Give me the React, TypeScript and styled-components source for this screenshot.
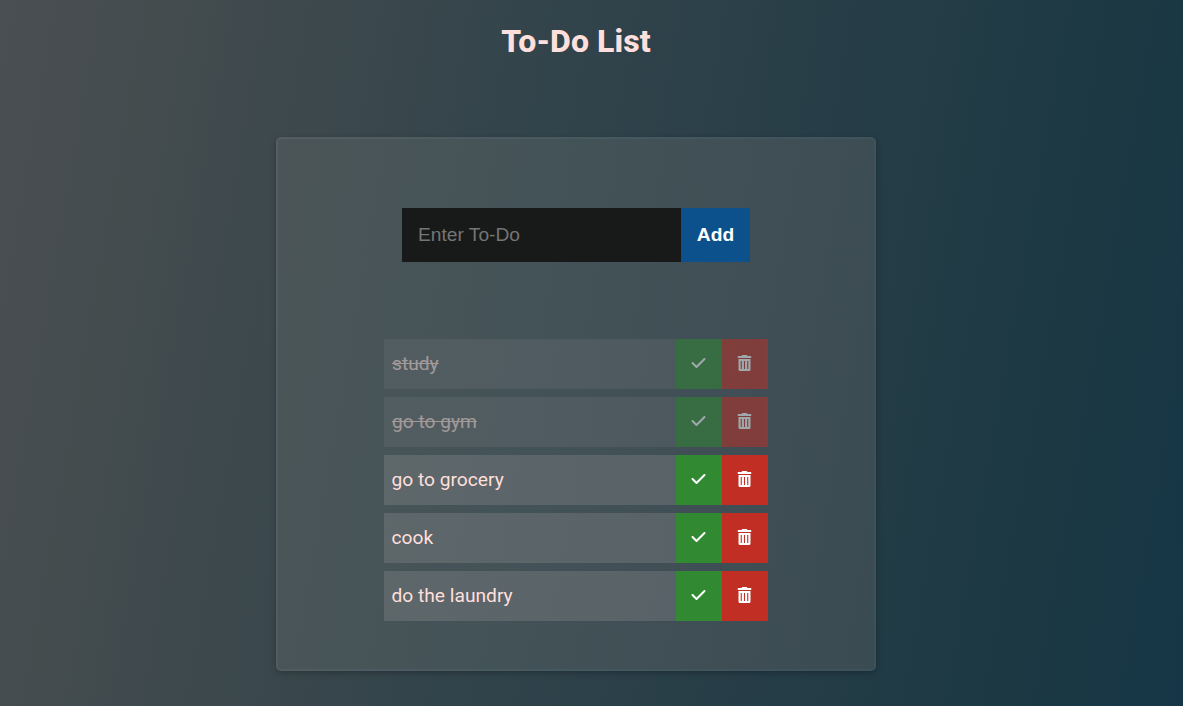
import React from "react";
import styled, { createGlobalStyle } from "styled-components";
import { FaCheck } from "react-icons/fa6";

const GlobalStyle = createGlobalStyle`
  * { box-sizing: border-box; }
  body {
    margin: 0;
    min-height: 100vh;
    color: #ffdfdb;
    font-family: Roboto, "Liberation Sans", sans-serif;
    background: linear-gradient(100deg, #4a4f54 0%, #444c4e 12%, #31434b 45%, #1b3843 88%, #163546 100%);
  }
`;

const Page = styled.main`
  display: flex;
  flex-direction: column;
  align-items: center;
  width: 1152px;
  height: 706px;
`;

const Title = styled.h1`
  margin: 22px 0 0;
  font-size: 32px;
  line-height: 38px;
  font-weight: 800;
  letter-spacing: 0.1px;
`;

const Card = styled.section`
  display: flex;
  flex-direction: column;
  align-items: center;
  width: 600px;
  height: 534px;
  margin-top: 77px;
  padding-top: 69px;
  border: 2px solid rgba(255, 255, 255, 0.05);
  border-radius: 5px;
  background: linear-gradient(100deg, #4b5557 0%, #445358 40%, #3b4b52 100%) padding-box, rgba(255, 255, 255, 0.07) border-box;
  box-shadow: 0 2px 6px rgba(0, 0, 0, 0.25);
`;

const Form = styled.form`
  display: flex;
  height: 54px;
`;

const Field = styled.input`
  width: 279px;
  padding: 0 16px;
  border: 0;
  border-radius: 0;
  outline: none;
  background: #181a19;
  color: #ffdfdb;
  font: 19.2px "Liberation Sans", Arial, sans-serif;
  &::placeholder { color: #757575; }
`;

const AddButton = styled.button`
  width: 69px;
  padding: 0;
  border: 0;
  background: #0c518c;
  color: #fff;
  font: bold 19.2px "Liberation Sans", Arial, sans-serif;
`;

const List = styled.ul`
  display: flex;
  flex-direction: column;
  gap: 8px;
  width: 384px;
  margin: 77px 0 0;
  padding: 0;
  list-style: none;
`;

const Item = styled.li<{ $done: boolean }>`
  display: flex;
  height: 50px;
  opacity: ${({ $done }) => ($done ? 0.5 : 1)};
`;

const Label = styled.span<{ $done: boolean }>`
  flex: 1;
  padding-left: ${({ $done }) => ($done ? "8px" : "7.5px")};
  background: rgba(255, 230, 228, 0.13);
  font-size: 19.2px;
  line-height: 50px;
  text-decoration: ${({ $done }) => ($done ? "line-through" : "none")};
`;

const IconButton = styled.button<{ $color: string }>`
  display: flex;
  align-items: center;
  justify-content: center;
  width: 46px;
  padding: 0 0 2px;
  border: 0;
  background: ${({ $color }) => $color};
  color: #fff;
  font-size: 16px;

  svg { transform: translateX(-0.5px); }
`;

const TrashIcon = () => (
  <svg width="14" height="16" viewBox="0 0 14 16" fill="currentColor" aria-hidden="true">
    <path d="M0.5 1H4l.5-.7Q4.7 0 5.1 0h3.8q.4 0 .6.3L10 1h3.5q.5 0 .5.5v1q0 .5-.5.5h-13Q0 3 0 2.5v-1Q0 1 .5 1Z" />
    <path fillRule="evenodd" d="M1 4h12v10.5q0 1.5-1.5 1.5h-9Q1 16 1 14.5ZM3.2 6v8h1.1V6ZM6.45 6v8h1.1V6ZM9.7 6v8h1.1V6Z" />
  </svg>
);

const todos = [
  { text: "study", done: true },
  { text: "go to gym", done: true },
  { text: "go to grocery", done: false },
  { text: "cook", done: false },
  { text: "do the laundry", done: false },
];

export default function App() {
  return (
    <>
      <GlobalStyle />
      <Page>
        <Title>To-Do List</Title>
        <Card>
          <Form onSubmit={(e) => e.preventDefault()}>
            <Field placeholder="Enter To-Do" />
            <AddButton>Add</AddButton>
          </Form>
          <List>
            {todos.map(({ text, done }) => (
              <Item key={text} $done={done}>
                <Label $done={done}>{text}</Label>
                <IconButton $color="#318a31" aria-label="Complete"><FaCheck /></IconButton>
                <IconButton $color="#c12e23" aria-label="Delete"><TrashIcon /></IconButton>
              </Item>
            ))}
          </List>
        </Card>
      </Page>
    </>
  );
}
